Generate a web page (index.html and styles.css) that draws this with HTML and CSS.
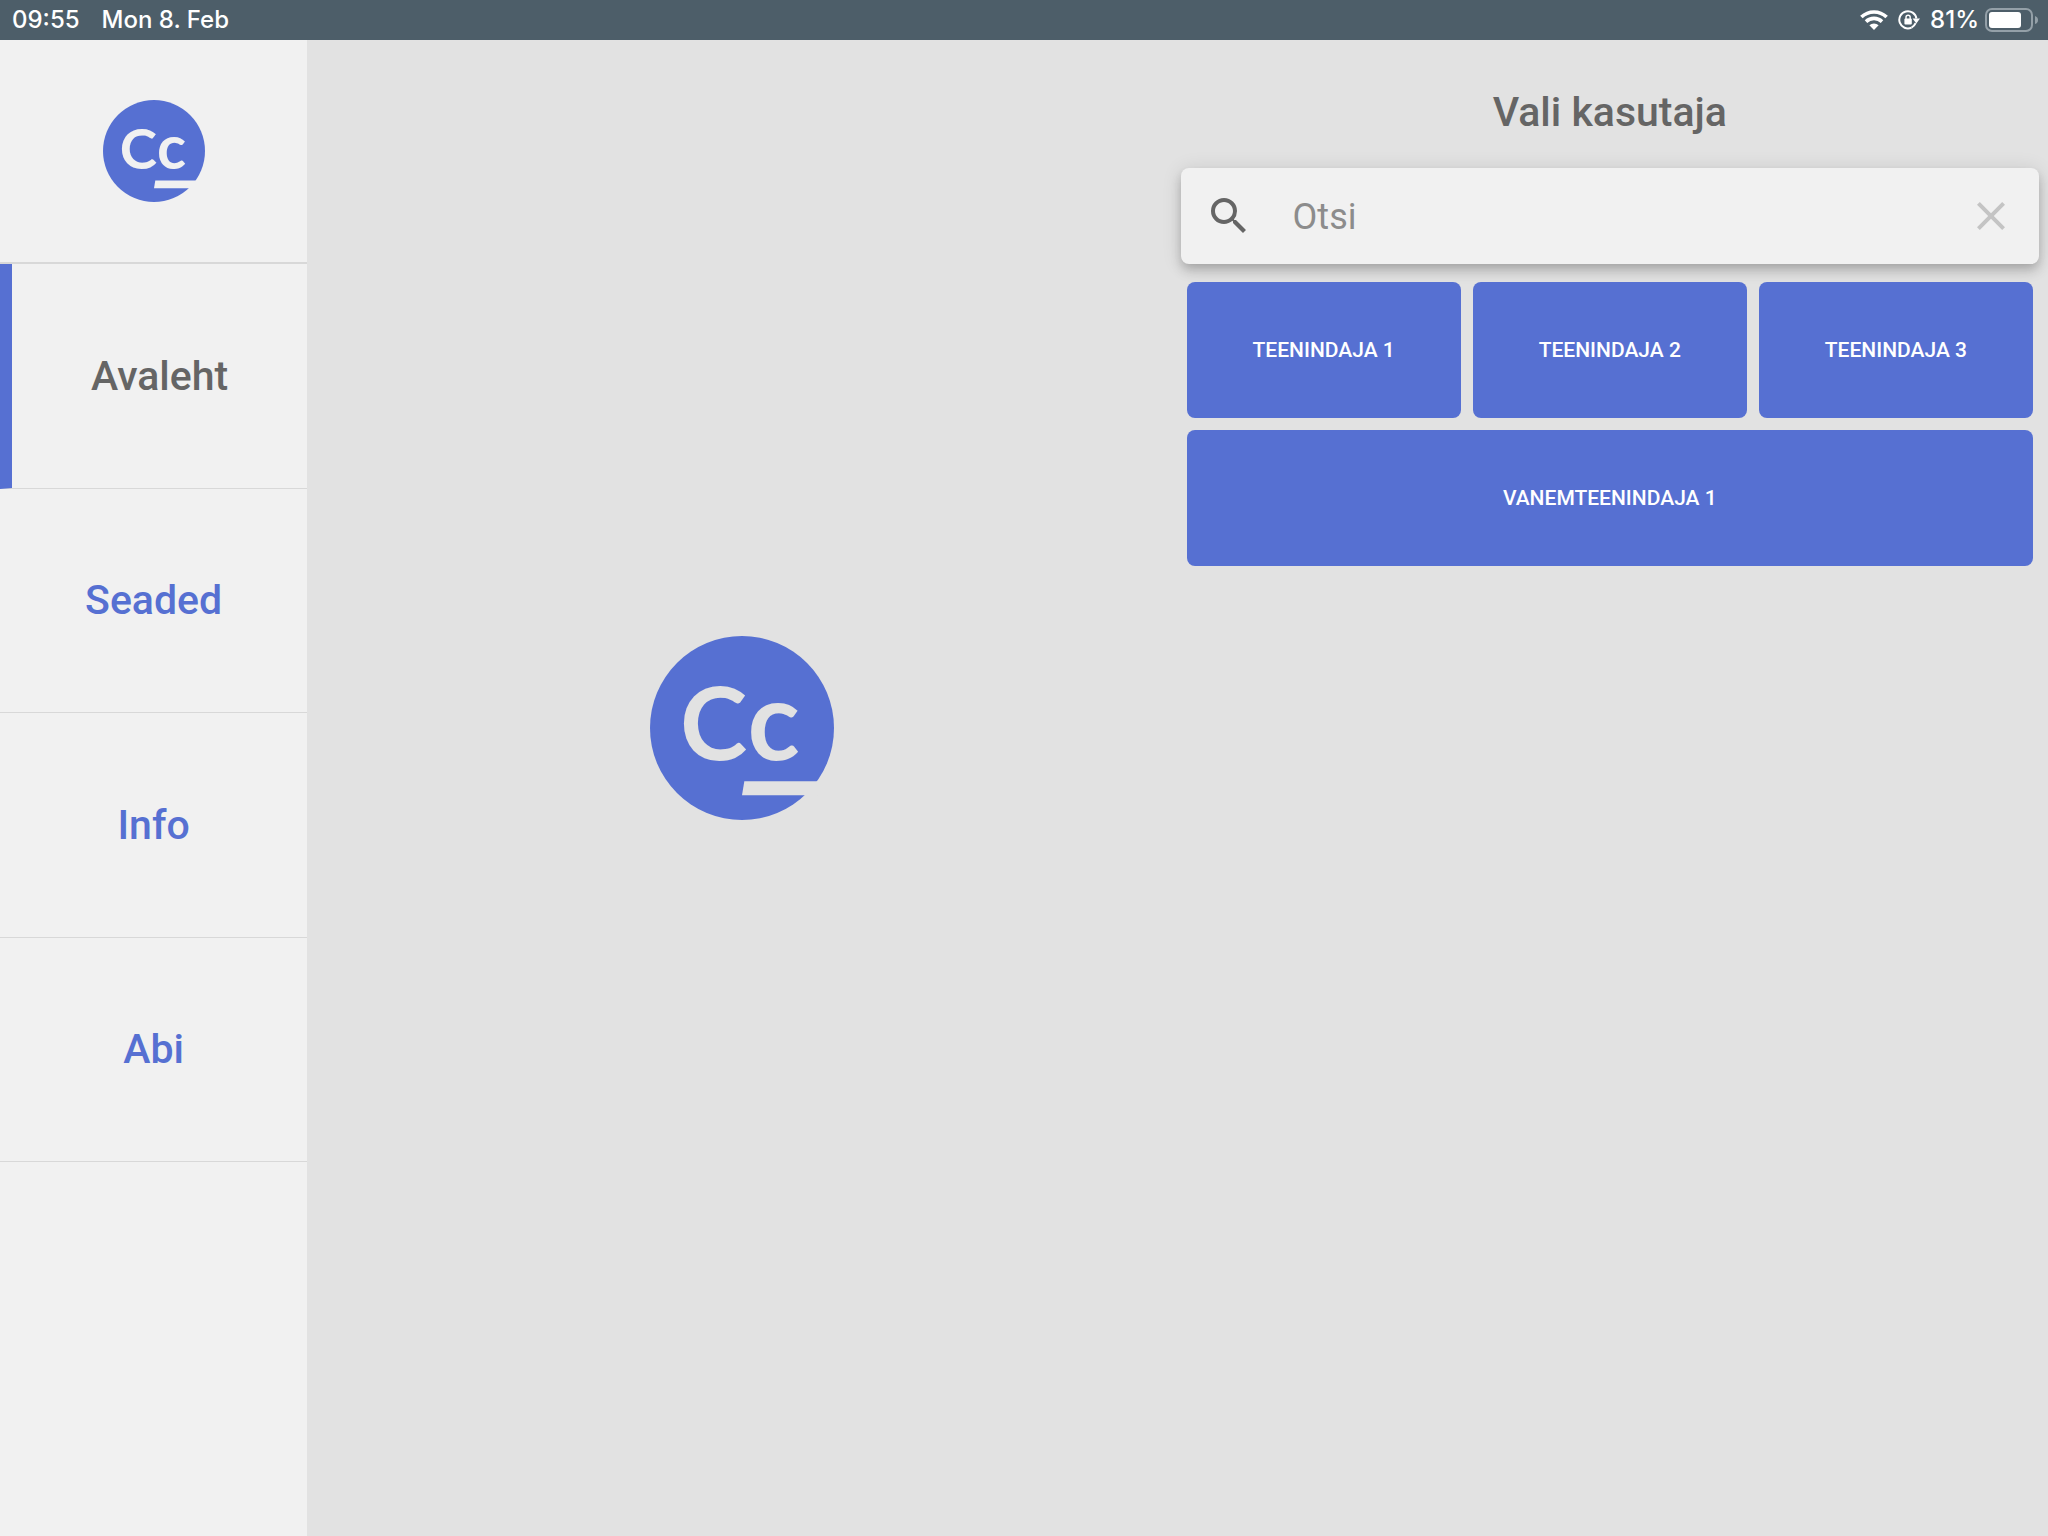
FILE: index.html
```html
<!DOCTYPE html>
<html lang="et">
<head>
<meta charset="utf-8">
<meta name="viewport" content="width=device-width, initial-scale=1">
<title>Avaleht</title>
<link rel="stylesheet" href="styles.css">
</head>
<body>
<header class="status">
  <time>09:55</time>
  <span class="date">Mon 8. Feb</span>
  <svg class="wifi" viewBox="0 0 28 20" aria-hidden="true">
    <path d="M14 20L9.4 15.3A6.6 6.6 0 0 1 18.6 15.3Z"/>
    <path class="line" d="M6 11.6A11.6 11.6 0 0 1 22 11.6M1.4 7A18.2 18.2 0 0 1 26.6 7"/>
  </svg>
  <svg class="lock" viewBox="0 0 22 20" aria-hidden="true">
    <path class="line" d="M13.5 17.6A8.6 8.6 0 1 1 18.4 8.5"/>
    <path d="M14.6 8.6H22L18.3 13.4Z"/>
    <path class="line" d="M17.6 13.2A8.6 8.6 0 0 1 13.5 17.6"/>
    <rect x="6.4" y="8.6" width="7.4" height="5.8" rx="1"/>
    <path class="shackle" d="M8 9V7.4A2.1 2.1 0 0 1 12.2 7.4V9"/>
  </svg>
  <span class="percent">81%</span>
  <svg class="battery" viewBox="0 0 54 24" aria-hidden="true">
    <rect class="case" x="1" y="1" width="46" height="22" rx="6"/>
    <rect x="4" y="4" width="32" height="16" rx="3"/>
    <path class="tip" d="M50 8Q53 9 53 12Q53 15 50 16Z"/>
  </svg>
</header>
<div class="app">
  <nav class="sidebar">
    <div class="brand">
      <svg class="brand-logo" viewBox="0 0 550 550" role="img" aria-label="Cc">
        <circle class="logo-disc" cx="275" cy="275" r="275"/>
        <path class="logo-cut" d="M282 434H500V476H275Z"/>
        <text class="logo-cut logo-text" x="90" y="371">C<tspan class="logo-small">c</tspan></text>
      </svg>
    </div>
    <a class="nav-item active" href="#avaleht">Avaleht</a>
    <a class="nav-item" href="#seaded">Seaded</a>
    <a class="nav-item" href="#info">Info</a>
    <a class="nav-item" href="#abi">Abi</a>
  </nav>
  <main class="main">
    <section class="hero">
      <svg class="hero-logo" viewBox="0 0 550 550" role="img" aria-label="Cc">
        <circle class="logo-disc" cx="275" cy="275" r="275"/>
        <path class="logo-cut" d="M282 434H500V476H275Z"/>
        <text class="logo-cut logo-text" x="90" y="371">C<tspan class="logo-small">c</tspan></text>
      </svg>
    </section>
    <section class="users">
      <h1 class="title">Vali kasutaja</h1>
      <form class="search">
        <label class="search-label" for="q" aria-label="Otsi">
          <svg class="icon" viewBox="0 0 24 24" aria-hidden="true"><path d="M15.5 14h-.79l-.28-.27A6.471 6.471 0 0 0 16 9.5 6.5 6.5 0 1 0 9.5 16c1.61 0 3.09-.59 4.23-1.57l.27.28v.79l5 4.99L20.49 19l-4.99-5zm-6 0C7.01 14 5 11.99 5 9.5S7.01 5 9.5 5 14 7.01 14 9.5 11.99 14 9.5 14z"/></svg>
        </label>
        <input class="search-input" id="q" type="text" placeholder="Otsi">
        <button class="clear" type="reset" aria-label="Tühjenda">
          <svg class="icon" viewBox="0 0 24 24" aria-hidden="true"><path d="M19 6.41L17.59 5 12 10.59 6.41 5 5 6.41 10.59 12 5 17.59 6.41 19 12 13.41 17.59 19 19 17.59 13.41 12z"/></svg>
        </button>
      </form>
      <div class="user-grid">
        <button class="user" type="button">TEENINDAJA 1</button>
        <button class="user" type="button">TEENINDAJA 2</button>
        <button class="user" type="button">TEENINDAJA 3</button>
        <button class="user wide" type="button">VANEMTEENINDAJA 1</button>
      </div>
    </section>
  </main>
</div>
</body>
</html>
```
FILE: styles.css
```css
:root {
  --blue: #5670d2;
  --grey: #656565;
  --page: #e2e2e2;
  --surface: #f1f1f1;
  --line: #d8d8d8;
}

* { box-sizing: border-box; }

body {
  margin: 0;
  min-height: 100vh;
  display: grid;
  grid-template-rows: 40px 1fr;
  background: var(--page);
  font-family: Roboto, "Liberation Sans", sans-serif;
}

/* Status bar */
.status {
  display: flex;
  align-items: center;
  padding: 0 9px 0 12px;
  background: #4d5e69;
  color: #fff;
  font: 500 24px/40px Inter, "Liberation Sans", sans-serif;
}
.status svg { fill: #fff; flex: none; }
.date { margin: 0 auto 0 22px; }
.wifi { width: 28px; height: 20px; margin-right: 10px; }
.wifi .line { fill: none; stroke: #fff; stroke-width: 3.6; }
.lock { width: 22px; height: 20px; margin-right: 10px; }
.lock .line { fill: none; stroke: #fff; stroke-width: 2; }
.lock .shackle { fill: none; stroke: #fff; stroke-width: 1.4; }
.percent { margin-right: 6px; }
.battery { width: 54px; height: 24px; }
.battery .case { fill: none; stroke: #94a0a8; stroke-width: 2; }
.battery .tip { fill: #94a0a8; }

.app { display: grid; grid-template-columns: 15% 1fr; }

/* Sidebar */
.sidebar {
  display: grid;
  grid-template-rows: repeat(5, 15%);
  background: var(--surface);
  --cut: var(--surface);
}
.brand {
  display: flex;
  align-items: center;
  justify-content: center;
  border-bottom: 2px solid var(--line);
}
.brand-logo { width: 102px; height: 102px; }
.nav-item {
  display: flex;
  align-items: center;
  justify-content: center;
  border-bottom: 1px solid var(--line);
  color: var(--blue);
  font-size: 41px;
  font-weight: 500;
  line-height: 48px;
  text-decoration: none;
}
.nav-item.active { border-left: 12px solid var(--blue); color: var(--grey); }

/* Logo */
.logo-disc { fill: var(--blue); }
.logo-cut { fill: var(--cut); }
.logo-text { font-family: Lato, sans-serif; font-weight: 700; font-size: 304px; }
.logo-small { font-size: 326px; }

/* Main area */
.main { display: grid; grid-template-columns: 1fr 1fr; --cut: var(--page); }
.hero {
  display: flex;
  align-items: center;
  justify-content: center;
  padding-bottom: 120px;
}
.hero-logo { width: 184px; height: 184px; }

.users { padding: 48px 9px 0 3px; }
.title {
  margin: 0 0 32px;
  color: var(--grey);
  font-size: 41px;
  font-weight: 500;
  line-height: 48px;
  text-align: center;
}
.search {
  display: flex;
  align-items: center;
  height: 96px;
  padding: 0 24px;
  border-radius: 8px;
  background: var(--surface);
  box-shadow: 0 4px 8px -2px rgba(0, 0, 0, .12), 0 8px 12px rgba(0, 0, 0, .12), 0 2px 20px rgba(0, 0, 0, .12);
}
.search-label { display: flex; color: var(--grey); }
.icon { width: 48px; height: 48px; fill: currentColor; }
.search-input {
  flex: 1;
  min-width: 0;
  height: 96px;
  padding: 2px 40px 0;
  border: 0;
  outline: 0;
  background: none;
  color: var(--grey);
  font: 400 36px/48px Roboto, "Liberation Sans", sans-serif;
}
.search-input::placeholder { color: #8c8c8c; opacity: 1; }
.clear { display: flex; padding: 0; border: 0; background: none; color: #c4c4c4; }

.user-grid {
  display: grid;
  grid-template-columns: repeat(3, 1fr);
  gap: 12px;
  padding: 18px 6px;
}
.user {
  min-height: 136px;
  padding: 0 12px;
  border: 0;
  border-radius: 8px;
  background: var(--blue);
  color: #fff;
  font: 500 21px/24px Roboto, "Liberation Sans", sans-serif;
}
.wide { grid-column: 1 / -1; }
```
